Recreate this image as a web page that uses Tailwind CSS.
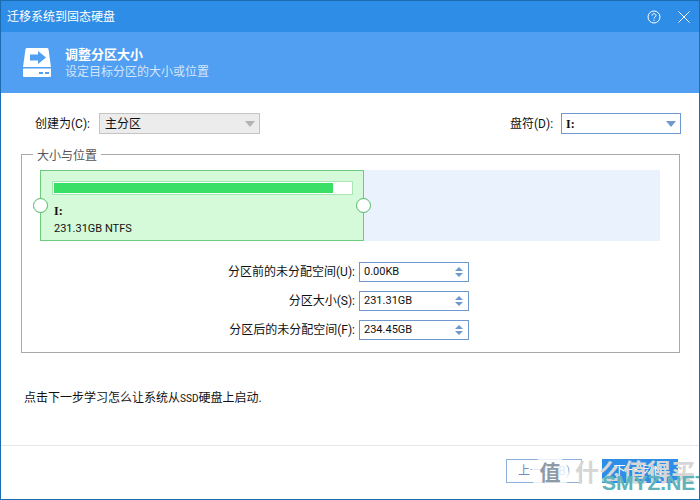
<!DOCTYPE html>
<html lang="zh-CN">
<head>
  <meta charset="UTF-8">
  <meta name="viewport" content="width=device-width, initial-scale=1">
  <title>迁移系统到固态硬盘</title>
  <script src="https://cdn.jsdelivr.net/npm/@tailwindcss/browser@4"></script>
</head>
<body class="bg-white overflow-hidden">
  <div class="relative w-[700px] h-[500px] flex flex-col bg-white border-x-[1px] border-b-[1px] border-[#1b6cb0] text-[12px] text-[#111] font-['Roboto','Noto_Sans_CJK_SC',sans-serif] overflow-hidden">

    <!-- title bar -->
    <div class="h-[32px] shrink-0 bg-[#2e8de6] border-t-[1px] border-[#1b6cb0] flex items-center justify-between pl-[6px] pr-[9px] text-white">
      <span>迁移系统到固态硬盘</span>
      <div class="flex items-center gap-[17px]">
        <svg width="14" height="14" viewBox="0 0 14 14" fill="none" stroke="#fff" stroke-width="1">
          <circle cx="7" cy="7" r="6"/>
          <path d="M5 5.6c0-1.2 1-1.9 2-1.9s2 .7 2 1.8c0 1.300-2 1.500-2 3"/>
          <path d="M7 9.600v1.200"/>
        </svg>
        <svg width="12" height="12" viewBox="0 0 12 12" fill="none" stroke="#fff" stroke-width="1">
          <path d="M.5.5l11 11M11.500.5l-11 11"/>
        </svg>
      </div>
    </div>

    <!-- header -->
    <div class="h-[61px] shrink-0 bg-[#519ff2] flex items-center pl-[21px] gap-[13px] text-white">
      <svg width="30" height="30" viewBox="0 0 30 30">
        <path d="M5 0h20a1.500 1.500 0 0 1 1.500 1.300L29 19H1L3.500 1.300A1.500 1.500 0 0 1 5 0z" fill="#fff"/>
        <path d="M1 20.500h28V28a1 1 0 0 1-1 1H2a1 1 0 0 1-1-1z" fill="#fff"/>
        <path d="M8 6.500h8V3l8 6.500-8 6.500v-3.500H8z" fill="#519ff2"/>
        <path d="M17 24h4v2h-4zM23 24h4v2h-4z" fill="#519ff2"/>
      </svg>
      <div class="flex flex-col gap-[1px] pt-[1px]">
        <span class="text-[13px] leading-[16px] font-bold">调整分区大小</span>
        <span class="leading-[16px] text-[#d3e6fb]">设定目标分区的大小或位置</span>
      </div>
    </div>

    <!-- drive row -->
    <div class="flex justify-between items-center pl-[34px] pr-[18px] mt-[20px] h-[21px]">
      <div class="flex items-center">
        <span class="w-[64px]">创建为(C):</span>
        <div class="w-[161px] h-[21px] bg-[#ececec] border border-[#c4c4c4] flex items-center justify-between pl-[5px] pr-[4px]">
          <span>主分区</span>
          <span class="w-0 h-0 border-x-[5px] border-x-transparent border-t-[6px] border-t-[#b3b3b3]"></span>
        </div>
      </div>
      <div class="flex items-center">
        <span class="w-[51px]">盘符(D):</span>
        <div class="w-[120px] h-[21px] border border-[#6f98cf] flex items-center justify-between pl-[4px] pr-[4px]">
          <span class="font-['Liberation_Serif'] font-bold">I:</span>
          <span class="w-0 h-0 border-x-[5px] border-x-transparent border-t-[6px] border-t-[#6f98cf]"></span>
        </div>
      </div>
    </div>

    <!-- size and position -->
    <fieldset class="ml-[20px] mr-[19px] mt-[12px] h-[207px] border border-[#aaaaaa] pl-[18px] pr-[19px] pb-0">
      <legend class="-ml-[7px] px-[4px] text-[#555] leading-[16px]"><span class="relative top-[2px]">大小与位置</span></legend>

      <div class="relative h-[71px] bg-[#e9f2fd] mt-[8px]">
        <div class="relative w-[324px] h-[71px] bg-[#d5fad9] border border-[#6dcb7c] pl-[11px] pr-[10px] pt-[10px]">
          <div class="h-[14px] bg-white border border-[#a8e6b3] p-[1px] mb-[7px]">
            <div class="h-full w-[279px] bg-[#3ae066]"></div>
          </div>
          <div class="pl-[2px] leading-[18px] font-['Liberation_Serif'] font-bold">I:</div>
          <div class="pl-[2px] leading-[18px] text-[11px]">231.31GB NTFS</div>
          <span class="absolute -left-[8px] top-[27px] w-[15px] h-[15px] rounded-full bg-white border border-[#4fb862]"></span>
          <span class="absolute -right-[8px] top-[27px] w-[15px] h-[15px] rounded-full bg-white border border-[#4fb862]"></span>
        </div>
      </div>

      <div class="mt-[21px] flex flex-col gap-[9px] items-end pr-[191px]">
        <div class="flex items-center gap-[4px]">
          <span>分区前的未分配空间(U):</span>
          <div class="w-[110px] h-[20px] border border-[#6f98cf] flex items-center justify-between pl-[4px] pr-[4px] text-[11px]">
            <span>0.00KB</span>
            <span class="flex flex-col gap-[2px] pr-[1px]">
              <span class="w-0 h-0 border-x-[4px] border-x-transparent border-b-[4px] border-b-[#6f98cf]"></span>
              <span class="w-0 h-0 border-x-[4px] border-x-transparent border-t-[4px] border-t-[#6f98cf]"></span>
            </span>
          </div>
        </div>
        <div class="flex items-center gap-[4px]">
          <span>分区大小(S):</span>
          <div class="w-[110px] h-[20px] border border-[#6f98cf] flex items-center justify-between pl-[4px] pr-[4px] text-[11px]">
            <span>231.31GB</span>
            <span class="flex flex-col gap-[2px] pr-[1px]">
              <span class="w-0 h-0 border-x-[4px] border-x-transparent border-b-[4px] border-b-[#6f98cf]"></span>
              <span class="w-0 h-0 border-x-[4px] border-x-transparent border-t-[4px] border-t-[#6f98cf]"></span>
            </span>
          </div>
        </div>
        <div class="flex items-center gap-[4px]">
          <span>分区后的未分配空间(F):</span>
          <div class="w-[110px] h-[20px] border border-[#6f98cf] flex items-center justify-between pl-[4px] pr-[4px] text-[11px]">
            <span>234.45GB</span>
            <span class="flex flex-col gap-[2px] pr-[1px]">
              <span class="w-0 h-0 border-x-[4px] border-x-transparent border-b-[4px] border-b-[#6f98cf]"></span>
              <span class="w-0 h-0 border-x-[4px] border-x-transparent border-t-[4px] border-t-[#6f98cf]"></span>
            </span>
          </div>
        </div>
      </div>
    </fieldset>

    <p class="ml-[23px] mt-[37px] leading-[16px]">点击下一步学习怎么让系统从<span class="text-[10px]">SSD</span>硬盘上启动.</p>

    <!-- footer -->
    <div class="mt-auto h-[54px] shrink-0 border-t border-[#e6e6e6] flex justify-end gap-[20px] pt-[13px] pr-[21px]">
      <button class="w-[76px] h-[24px] border border-[#8fb0dc] text-[#6f8fc0]">上一步(B)</button>
      <button class="w-[76px] h-[24px] bg-[#2e8de6] text-white">下一步(N)</button>
    </div>

    <!-- watermark -->
    <div class="absolute left-[530px] top-[455px] w-[38px] h-[38px] rounded-full bg-white/80 flex items-center justify-center text-[21px] font-bold text-[#8d9aa8]">值</div>
    <div class="absolute left-[574px] top-[458px] text-[24px] leading-[30px] font-bold whitespace-nowrap text-[#d6d6d6]">什么值得买</div>
    <div class="absolute left-[601px] top-[471px] text-[21px] leading-[24px] font-bold text-[#5fb3bb] font-['Liberation_Sans']">SMYZ.NET</div>
  </div>
</body>
</html>
